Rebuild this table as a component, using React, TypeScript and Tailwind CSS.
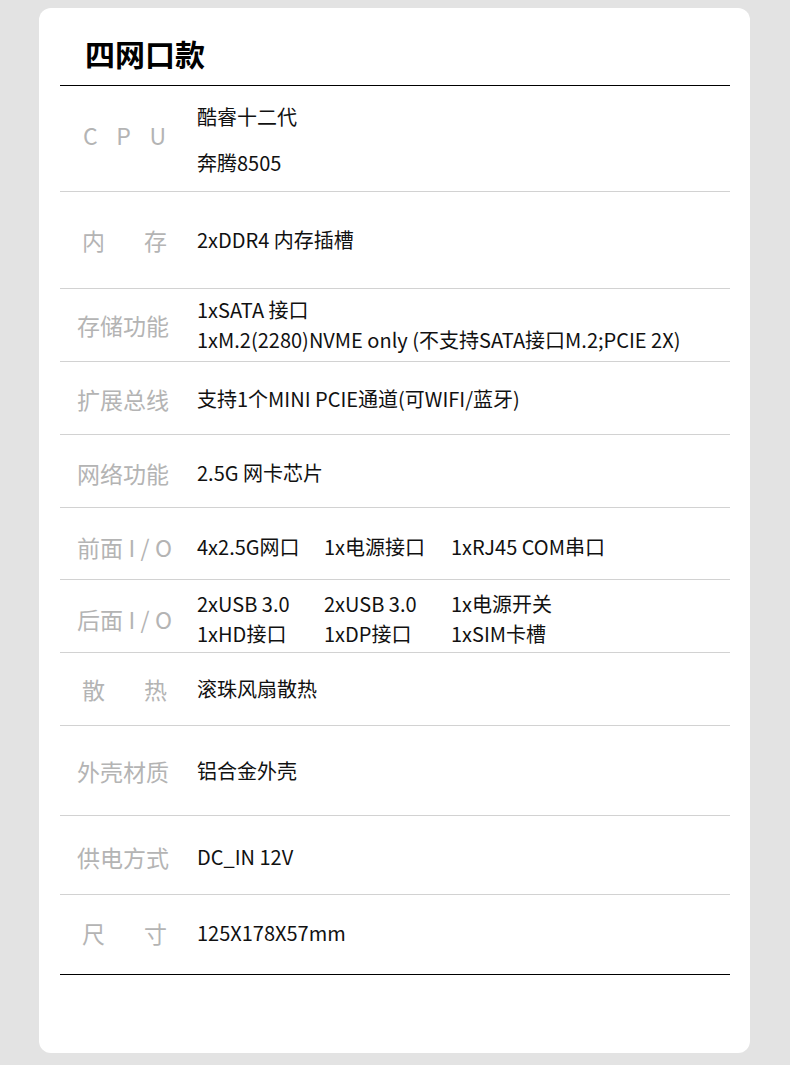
const font = { fontFamily: '"Noto Sans CJK SC", "Noto Sans", sans-serif' };

type Row = {
  label: string[];
  inset?: boolean;
  lines: string[][];
  h: string;
  pt?: string;
  labelCls?: string;
  gap?: string;
};

const rows: Row[] = [
  { label: ['C', 'P', 'U'], inset: true, lines: [['酷睿十二代'], ['奔腾8505']], h: 'h-[106px]', gap: 'gap-[16px]', labelCls: 'mb-[10px] px-[6px]', pt: 'pt-[2px]' },
  { label: ['内', '存'], inset: true, lines: [['2xDDR4 内存插槽']], h: 'h-[97px]' },
  { label: ['存储功能'], lines: [['1xSATA 接口'], ['1xM.2(2280)NVME only (不支持SATA接口M.2;PCIE 2X)']], h: 'h-[73px]' },
  { label: ['扩展总线'], lines: [['支持1个MINI PCIE通道(可WIFI/蓝牙)']], h: 'h-[73px]', pt: 'pt-[2px]' },
  { label: ['网络功能'], lines: [['2.5G 网卡芯片']], h: 'h-[73px]', pt: 'pt-[4px]' },
  { label: ['前面', 'I', '/', 'O'], lines: [['4x2.5G网口', '1x电源接口', '1xRJ45 COM串口']], h: 'h-[72px]', pt: 'pt-[6px]' },
  { label: ['后面', 'I', '/', 'O'], lines: [['2xUSB 3.0', '2xUSB 3.0', '1x电源开关'], ['1xHD接口', '1xDP接口', '1xSIM卡槽']], h: 'h-[73px]', pt: 'pt-[6px]' },
  { label: ['散', '热'], inset: true, lines: [['滚珠风扇散热']], h: 'h-[73px]' },
  { label: ['外壳材质'], lines: [['铝合金外壳']], h: 'h-[90px]' },
  { label: ['供电方式'], lines: [['DC_IN 12V']], h: 'h-[79px]', pt: 'pt-[4px]' },
  { label: ['尺', '寸'], inset: true, lines: [['125X178X57mm']], h: 'h-[80px]', pt: 'pb-[4px]' },
];

function SpecRow({ row, last }: { row: Row; last: boolean }) {
  return (
    <div
      className={`flex items-center ${row.h} ${row.pt ?? ''} border-b ${
        last ? 'border-black' : 'border-[#d2d2d2]'
      }`}
    >
      <div
        className={`w-[95px] ml-[17px] flex justify-between text-[23px] leading-[30px] text-[#b4b4b4] ${
          row.inset ? 'px-[5px]' : ''
        } ${row.labelCls ?? ''}`}
      >
        {row.label.map((s, i) => (
          <span key={i}>{s}</span>
        ))}
      </div>
      <div className={`ml-[25px] flex flex-col ${row.gap ?? ''} text-[20px] leading-[30px] text-[#111]`}>
        {row.lines.map((line, i) =>
          line.length > 1 ? (
            <div key={i} className="grid grid-cols-[127px_127px_auto]">
              {line.map((c, j) => (
                <span key={j}>{c}</span>
              ))}
            </div>
          ) : (
            <div key={i}>{line[0]}</div>
          )
        )}
      </div>
    </div>
  );
}

export default function App() {
  return (
    <div className="min-h-[1065px] bg-[#e3e3e3] pt-[8px] pb-[12px]" style={font}>
      <div className="ml-[39px] w-[711px] h-[1045px] bg-white rounded-[12px] px-[20px] pl-[21px]">
        <div className="h-[78px] pt-[12px] pl-[25px] text-[30px] leading-[66px] font-bold text-black border-b border-black">
          四网口款
        </div>
        {rows.map((r, i) => (
          <SpecRow key={i} row={r} last={i === rows.length - 1} />
        ))}
      </div>
    </div>
  );
}
